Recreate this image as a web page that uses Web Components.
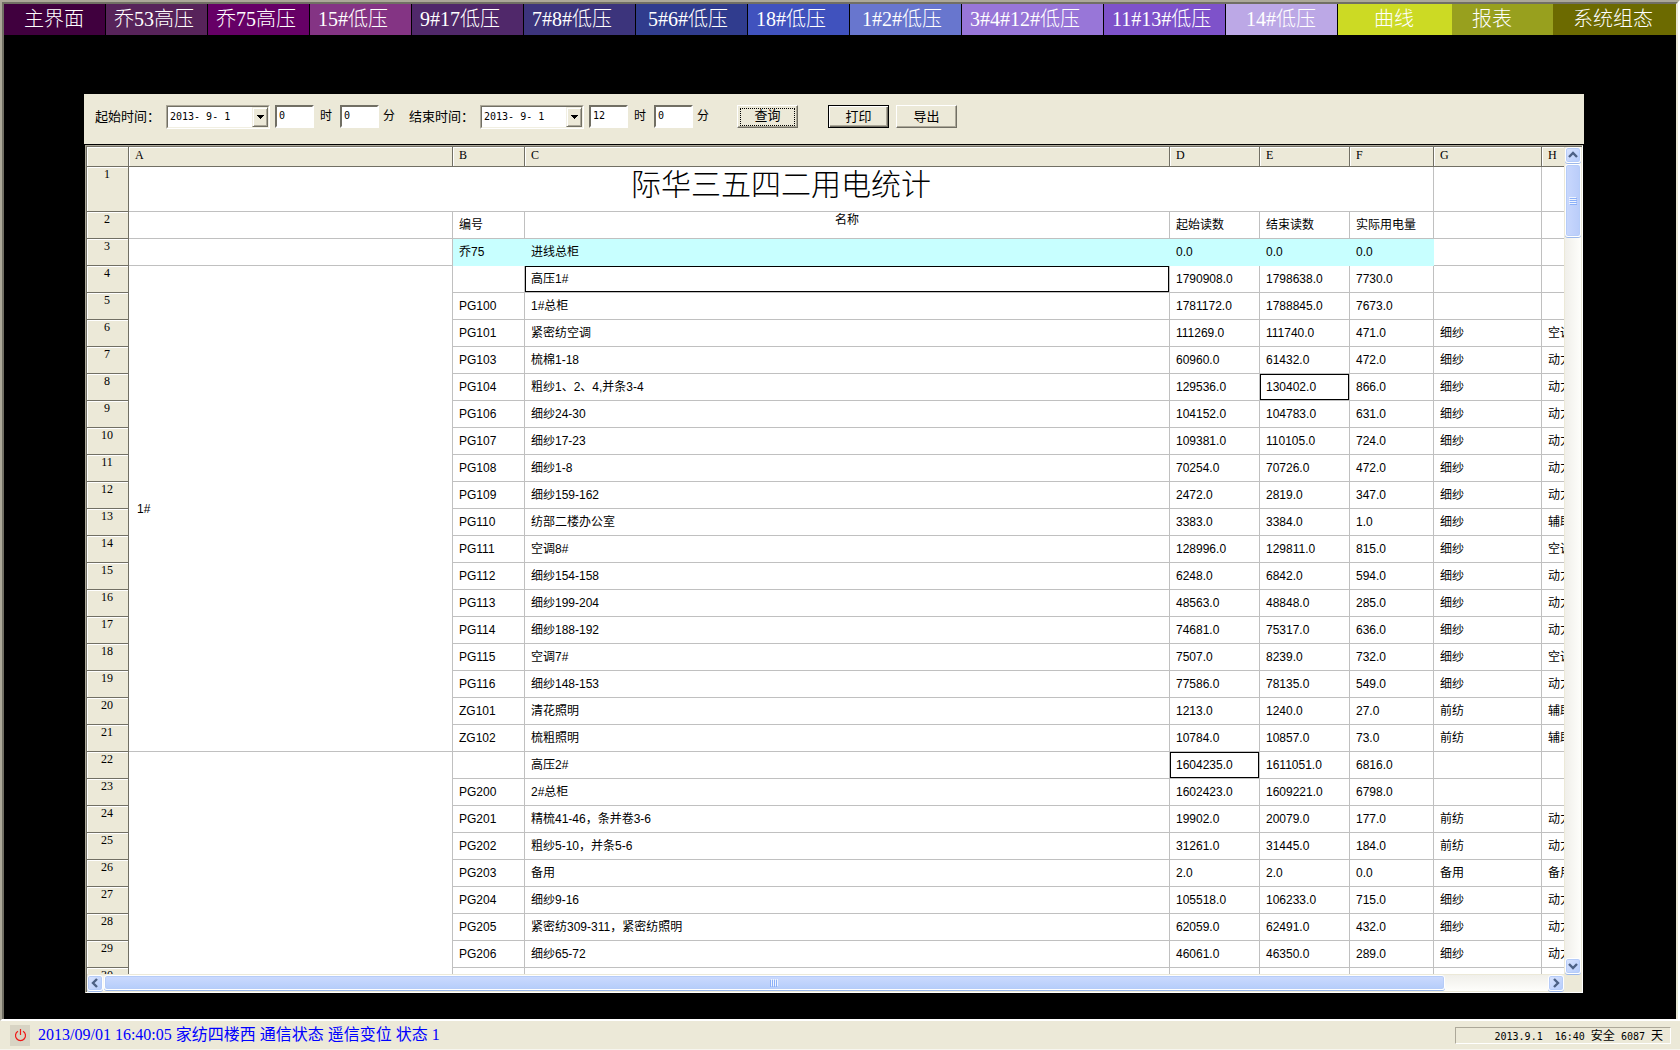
<!DOCTYPE html>
<html lang="zh-CN">
<head>
<meta charset="utf-8">
<title>际华三五四二用电统计</title>
<style>
  html, body { margin: 0; height: 100%; }
  body { background: #ece9d8; font-family: "Liberation Sans", "Noto Sans CJK SC", sans-serif; font-size: 12px; color: #000; }
</style>
</head>
<body>
<power-app>
  <nav-strip slot="nav"></nav-strip>
  <report-panel>
    <query-bar slot="tools"></query-bar>
    <report-sheet></report-sheet>
  </report-panel>
  <status-bar slot="status"></status-bar>
</power-app>

<script>
const define = (name, html, setup) => {
  customElements.define(name, class extends HTMLElement {
    constructor() {
      super();
      this.attachShadow({ mode: 'open' }).innerHTML = html;
    }
    connectedCallback() {
      if (setup && !this.ready) { this.ready = true; setup(this, this.shadowRoot); }
    }
  });
};

/* Window frame: navigation, black stage, status bar */
define('power-app', `
<style>
  :host { display: flex; flex-direction: column; height: 100vh; box-sizing: border-box; overflow: hidden; background: #ece9d8; }
  .frame { flex: 1; min-height: 0; display: flex; flex-direction: column; background: #000;
    border: 2px solid; border-color: #aca899 #fff #fff #aca899; }
  .inner { flex: 1; min-height: 0; display: flex; flex-direction: column;
    border: solid; border-width: 2px 2px 0 2px; border-color: #716f64 #ece9d8 #000 #716f64; }
  .stage { flex: 1; min-height: 0; display: flex; padding: 59px 92px 26px 80px; }
  ::slotted(report-panel) { flex: 1; min-width: 0; }
</style>
<div class="frame"><div class="inner">
  <slot name="nav"></slot>
  <main class="stage"><slot></slot></main>
</div></div>
<slot name="status"></slot>`);

/* Navigation */
const NAV = [
  ['主界面', 102, '#40003e', 'l'], ['乔53高压', 102, '#57235a', 's'], ['乔75高压', 102, '#660066', 's'],
  ['15#低压', 102, '#843484', 's'], ['9#17低压', 112, '#50286a', 's'], ['7#8#低压', 112, '#3c347c', 's'],
  ['5#6#低压', 112, '#303c8e', 'm'], ['18#低压', 102, '#4052be', 's'], ['1#2#低压', 112, '#6876ce', 'm'],
  ['3#4#12#低压', 142, '#9876d8', 's'], ['11#13#低压', 122, '#7e52ca', 's'], ['14#低压', 112, '#bca8e6', 'l'],
  ['曲线', 114, '#ccda24', 'x'], ['报表', 101, '#98a01e', 'l'], ['系统组态', 123, '#6c6a00', 'l']
];
define('nav-strip', `
<style>
  :host { display: block; }
  nav { display: grid; height: 31px; grid-template-columns: ${NAV.map(n => n[1] + 'fr').join(' ')}; }
  a { display: flex; align-items: center; box-sizing: border-box; min-width: 0; white-space: nowrap; overflow: hidden;
    color: #fff; text-decoration: none; border-right: 1px solid #000;
    font: 20px/28px "Liberation Serif", "Noto Sans CJK SC", serif; font-weight: 300; padding-bottom: 2px; }
  a:nth-last-child(-n+3) { border-right: 0; }
  .s { padding-left: 8px; } .m { padding-left: 12px; } .l { padding-left: 20px; } .x { padding-left: 36px; }
</style>
<nav>${NAV.map(n => `<a href="#" class="${n[3]}" style="background:${n[2]}">${n[0]}</a>`).join('')}</nav>`);

/* Panel holding the toolbar and the sheet */
define('report-panel', `
<style>
  :host { display: flex; flex-direction: column; }
  ::slotted(query-bar) { flex: none; }
  ::slotted(report-sheet) { flex: 1; min-height: 0; }
</style>
<slot name="tools"></slot><slot></slot>`);

/* Date drop-down */
define('date-box', `
<style>
  :host { display: block; width: 104px; }
  .box { display: grid; height: 24px; box-sizing: border-box; background: #fff; border: 1px solid; border-color: #aca899 #fff #fff #aca899; }
  select, .drop { grid-area: 1 / 1; }
  select { appearance: none; border: 1px solid; border-color: #716f64 #f1efe2 #f1efe2 #716f64; border-radius: 0; background: #fff; padding: 0 2px 2px; margin: 0;
    font: 10px "DejaVu Sans Mono", monospace; color: #000; }
  .drop { justify-self: end; margin: 1px; width: 14px; display: flex; align-items: center; justify-content: center; pointer-events: none;
    background: #ece9d8; border: 1px solid; border-color: #f1efe2 #716f64 #716f64 #f1efe2; box-shadow: inset 1px 1px #fff, inset -1px -1px #aca899; }
</style>
<div class="box">
  <select><option></option></select>
  <span class="drop"><svg width="7" height="4" viewBox="0 0 7 4" shape-rendering="crispEdges"><path d="M0 0h7L4 4H3z"/></svg></span>
</div>`, (host, root) => {
  root.querySelector('select').setAttribute('aria-label', host.getAttribute('label'));
  root.querySelector('option').textContent = host.getAttribute('value').replace(/ /g, '\u00a0');
});

/* Query toolbar */
define('query-bar', `
<style>
  :host { display: block; background: #ece9d8; border-bottom: 1px solid #000; }
  form { display: flex; align-items: flex-start; height: 50px; box-sizing: border-box; padding: 11px 0 0 11px; white-space: nowrap; }
  .t { width: 71px; font-size: 13px; line-height: 24px; }
  .u { line-height: 22px; padding: 0 8px 0 6px; }
  .u.end { padding: 0 14px 0 4px; }
  input { width: 39px; height: 23px; box-sizing: border-box; margin: 0; padding: 0 2px 3px; border: 2px solid; border-color: #716f64 #fff #fff #716f64;
    border-radius: 0; background: #fff; font: 10px "DejaVu Sans Mono", monospace; color: #000; }
  button { width: 61px; height: 23px; box-sizing: border-box; padding: 0 0 3px; margin: 0; border: 1px solid; border-color: #fff #716f64 #716f64 #fff; border-radius: 0;
    box-shadow: inset -1px -1px #aca899; background: #ece9d8; color: #000; font: 13px "Liberation Sans", "Noto Sans CJK SC", sans-serif;
    display: flex; align-items: center; justify-content: center; }
  .focus { padding: 0; }
  .focus span { border: 1px dotted #000; width: 53px; height: 16px; line-height: 14px; }
  .default { border-color: #000; box-shadow: inset 1px 1px #fff, inset -1px -1px #716f64, inset -2px -2px #aca899; }
  date-box { margin-right: 5px; }
  .go { margin: 0 30px 0 14px; }
  .default { margin-right: 7px; }
</style>
<form onsubmit="return false">
  <span class="t">起始时间：</span><date-box label="起始时间" value="2013- 9- 1"></date-box>
  <input id="sh" value="0"><label class="u" for="sh">时</label>
  <input id="sm" value="0"><label class="u end" for="sm">分</label>
  <span class="t">结束时间：</span><date-box label="结束时间" value="2013- 9- 1"></date-box>
  <input id="eh" value="12"><label class="u" for="eh">时</label>
  <input id="em" value="0"><label class="u end" for="em">分</label>
  <button type="button" class="go focus"><span>查询</span></button>
  <button type="button" class="default">打印</button>
  <button type="button">导出</button>
</form>`);

/* Scroll bars in the Luna style */
define('luna-scroll', `
<style>
  :host { display: flex; background: linear-gradient(90deg, #f0efea, #fefefb); }
  :host([dir-x]) { height: 17px; background: linear-gradient(#f0efea, #fefefb); border-top: 1px solid #ece9d8; box-sizing: border-box; }
  :host([dir-y]) { width: 17px; flex-direction: column; border-left: 1px solid #ece9d8; box-sizing: border-box; }
  button, .thumb { box-sizing: border-box; border: 1px solid #fff; border-radius: 3px; padding: 0; margin: 0; display: flex; align-items: center; justify-content: center;
    box-shadow: inset 0 0 0 1px #b6ccf8, 0 1px #9cb8ea; }
  button { width: 16px; height: 16px; flex: none; background: linear-gradient(135deg, #dbe5fe, #b4cbfb); }
  .thumb { background: linear-gradient(90deg, #c9d8fd, #b9ccf9); flex: none; }
  :host([dir-x]) .thumb { background: linear-gradient(#ccdafe, #b5cdfa); height: 15px; margin-left: 1px; }
  :host([dir-y]) .thumb { width: 16px; margin-top: 1px; }
  .gap { flex: 1; }
</style>
<button type="button" class="a"></button><div class="thumb"></div><div class="gap"></div><button type="button" class="b"></button>`,
(host, root) => {
  const x = host.hasAttribute('dir-x');
  const arrow = deg => `<svg width="10" height="10" viewBox="0 0 10 10"><path d="M1 7 5 3 9 7" transform="rotate(${deg} 5 5)" fill="none" stroke="#4d6185" stroke-width="2.4"/></svg>`;
  root.querySelector('.a').innerHTML = arrow(x ? -90 : 0);
  root.querySelector('.b').innerHTML = arrow(x ? 90 : 180);
  root.querySelector('.a').setAttribute('aria-label', x ? '左' : '上');
  root.querySelector('.b').setAttribute('aria-label', x ? '右' : '下');
  const t = root.querySelector('.thumb');
  t.style[x ? 'width' : 'height'] = host.getAttribute('size');
  t.innerHTML = `<svg width="8" height="8" viewBox="0 0 8 8" shape-rendering="crispEdges"><g ${x ? 'transform="rotate(90 4 4)"' : ''}>
    <path d="M0 .5h7M0 2.5h7M0 4.5h7M0 6.5h7" stroke="#eef4fe"/><path d="M1 1.5h7M1 3.5h7M1 5.5h7M1 7.5h7" stroke="#8cb0f8"/></g></svg>`;
});

/* Spreadsheet */
const ROWS = [
  ['', '高压1#', '1790908.0', '1798638.0', '7730.0', '', ''],
  ['PG100', '1#总柜', '1781172.0', '1788845.0', '7673.0', '', ''],
  ['PG101', '紧密纺空调', '111269.0', '111740.0', '471.0', '细纱', '空调'],
  ['PG103', '梳棉1-18', '60960.0', '61432.0', '472.0', '细纱', '动力'],
  ['PG104', '粗纱1、2、4,并条3-4', '129536.0', '130402.0', '866.0', '细纱', '动力'],
  ['PG106', '细纱24-30', '104152.0', '104783.0', '631.0', '细纱', '动力'],
  ['PG107', '细纱17-23', '109381.0', '110105.0', '724.0', '细纱', '动力'],
  ['PG108', '细纱1-8', '70254.0', '70726.0', '472.0', '细纱', '动力'],
  ['PG109', '细纱159-162', '2472.0', '2819.0', '347.0', '细纱', '动力'],
  ['PG110', '纺部二楼办公室', '3383.0', '3384.0', '1.0', '细纱', '辅助'],
  ['PG111', '空调8#', '128996.0', '129811.0', '815.0', '细纱', '空调'],
  ['PG112', '细纱154-158', '6248.0', '6842.0', '594.0', '细纱', '动力'],
  ['PG113', '细纱199-204', '48563.0', '48848.0', '285.0', '细纱', '动力'],
  ['PG114', '细纱188-192', '74681.0', '75317.0', '636.0', '细纱', '动力'],
  ['PG115', '空调7#', '7507.0', '8239.0', '732.0', '细纱', '空调'],
  ['PG116', '细纱148-153', '77586.0', '78135.0', '549.0', '细纱', '动力'],
  ['ZG101', '清花照明', '1213.0', '1240.0', '27.0', '前纺', '辅助'],
  ['ZG102', '梳粗照明', '10784.0', '10857.0', '73.0', '前纺', '辅助'],
  ['', '高压2#', '1604235.0', '1611051.0', '6816.0', '', ''],
  ['PG200', '2#总柜', '1602423.0', '1609221.0', '6798.0', '', ''],
  ['PG201', '精梳41-46，条并卷3-6', '19902.0', '20079.0', '177.0', '前纺', '动力'],
  ['PG202', '粗纱5-10，并条5-6', '31261.0', '31445.0', '184.0', '前纺', '动力'],
  ['PG203', '备用', '2.0', '2.0', '0.0', '备用', '备用'],
  ['PG204', '细纱9-16', '105518.0', '106233.0', '715.0', '细纱', '动力'],
  ['PG205', '紧密纺309-311，紧密纺照明', '62059.0', '62491.0', '432.0', '细纱', '动力'],
  ['PG206', '细纱65-72', '46061.0', '46350.0', '289.0', '细纱', '动力'],
  ['', '', '', '', '', '', '']
];
const PICKED = { '4-1': 1, '8-3': 1, '22-2': 1 };
const bodyRows = ROWS.map((r, i) => {
  const n = i + 4;
  const a = n === 4 ? '<td class="group" rowspan="18">1#</td>' : n === 22 ? '<td class="group" rowspan="9"></td>' : '';
  return `<tr><th scope="row">${n}</th>${a}${r.map((c, k) => `<td${PICKED[n + '-' + k] ? ' class="sel"' : ''}>${c}</td>`).join('')}</tr>`;
}).join('');

define('report-sheet', `
<style>
  :host { display: flex; margin: 0 1px; box-sizing: border-box; border: 1px solid; border-color: #aca899 #fff #fff #aca899; background: #ece9d8; }
  .in { flex: 1; min-width: 0; display: grid; grid-template: minmax(0, 1fr) 18px / minmax(0, 1fr) 18px; border: solid #716f64; border-width: 1px 0 0 1px; }
  .view { overflow: hidden; background: #fff; }
  table { width: calc(100% + 86px); table-layout: fixed; border-collapse: separate; border-spacing: 0; }
  th, td { box-sizing: border-box; height: 27px; line-height: 18px; padding: 0 6px; text-align: left; white-space: nowrap; overflow: hidden; font-weight: 400; }
  td { border: solid #c0c0c0; border-width: 0 1px 1px 0; vertical-align: middle; }
  th { background: #ece9d8; border: solid #716f64; border-width: 0 1px 1px 0; box-shadow: inset 1px 1px #fff; font-family: "Liberation Serif", serif; vertical-align: top; }
  thead th { height: 20px; line-height: 16px; }
  tbody th { text-align: center; padding-right: 7px; line-height: 15px; }
  .title td { height: 45px; vertical-align: top; }
  td.title-cell { font-size: 30px; font-weight: 300; line-height: 35px; text-align: center; }
  td.name { text-align: center; vertical-align: top; line-height: 17px; }
  td.hot { background: #c8ffff; border-color: #c8ffff; }
  td.sel { box-shadow: inset 0 0 0 1px #000; }
  td.group { padding-left: 8px; }
</style>
<div class="in">
  <div class="view">
    <table>
      <colgroup><col style="width:42px"><col style="width:324px"><col style="width:72px"><col><col style="width:90px"><col style="width:90px"><col style="width:84px"><col style="width:108px"><col style="width:108px"></colgroup>
      <thead><tr><th></th>${'ABCDEFGH'.split('').map(c => `<th scope="col">${c}</th>`).join('')}</tr></thead>
      <tbody>
        <tr class="title"><th scope="row">1</th><td colspan="6" class="title-cell">际华三五四二用电统计</td><td></td><td></td></tr>
        <tr><th scope="row">2</th><td></td><td>编号</td><td class="name">名称</td><td>起始读数</td><td>结束读数</td><td>实际用电量</td><td></td><td></td></tr>
        <tr><th scope="row">3</th><td></td><td class="hot">乔75</td><td class="hot">进线总柜</td><td class="hot">0.0</td><td class="hot">0.0</td><td class="hot">0.0</td><td></td><td></td></tr>
        ${bodyRows}
      </tbody>
    </table>
  </div>
  <luna-scroll dir-y size="73px"></luna-scroll>
  <luna-scroll dir-x size="calc(92% - 18px)"></luna-scroll>
  <span></span>
</div>`);

/* Status bar */
define('status-bar', `
<style>
  :host { display: flex; flex: none; justify-content: space-between; align-items: center; height: 29px; box-sizing: border-box; padding: 0 9px 0 10px;
    background: #ece9d8; border-bottom: 1px solid #f6f5ee; white-space: nowrap; }
  .msg { display: flex; align-items: center; gap: 8px; color: #00f; font: 16px/24px "Liberation Serif", "Noto Sans CJK SC", serif; }
  .ico { width: 20px; height: 21px; background: #d8d4c4; display: flex; align-items: center; justify-content: center; }
  .clock { width: 216px; height: 17px; box-sizing: border-box; border: 1px solid; border-color: #aca899 #fff #fff #aca899; padding-right: 7px; text-align: right;
    white-space: pre; font: 10px/14px "DejaVu Sans Mono", monospace; }
  .clock b { font: 12px/14px "Noto Sans CJK SC", sans-serif; }
</style>
<div class="msg"><span class="ico"><svg width="13" height="13" viewBox="0 0 13 13"><path d="M4 2.2a5 5 0 1 0 5 0M6.500 0v6" fill="none" stroke="#f01818" stroke-width="1.2"/></svg></span><span>2013/09/01 16:40:05 家纺四楼西 通信状态 遥信变位 状态 1</span></div>
<div class="clock">2013.9.1  16:40 <b>安全</b> 6087 <b>天</b></div>`);
</script>
</body>
</html>
